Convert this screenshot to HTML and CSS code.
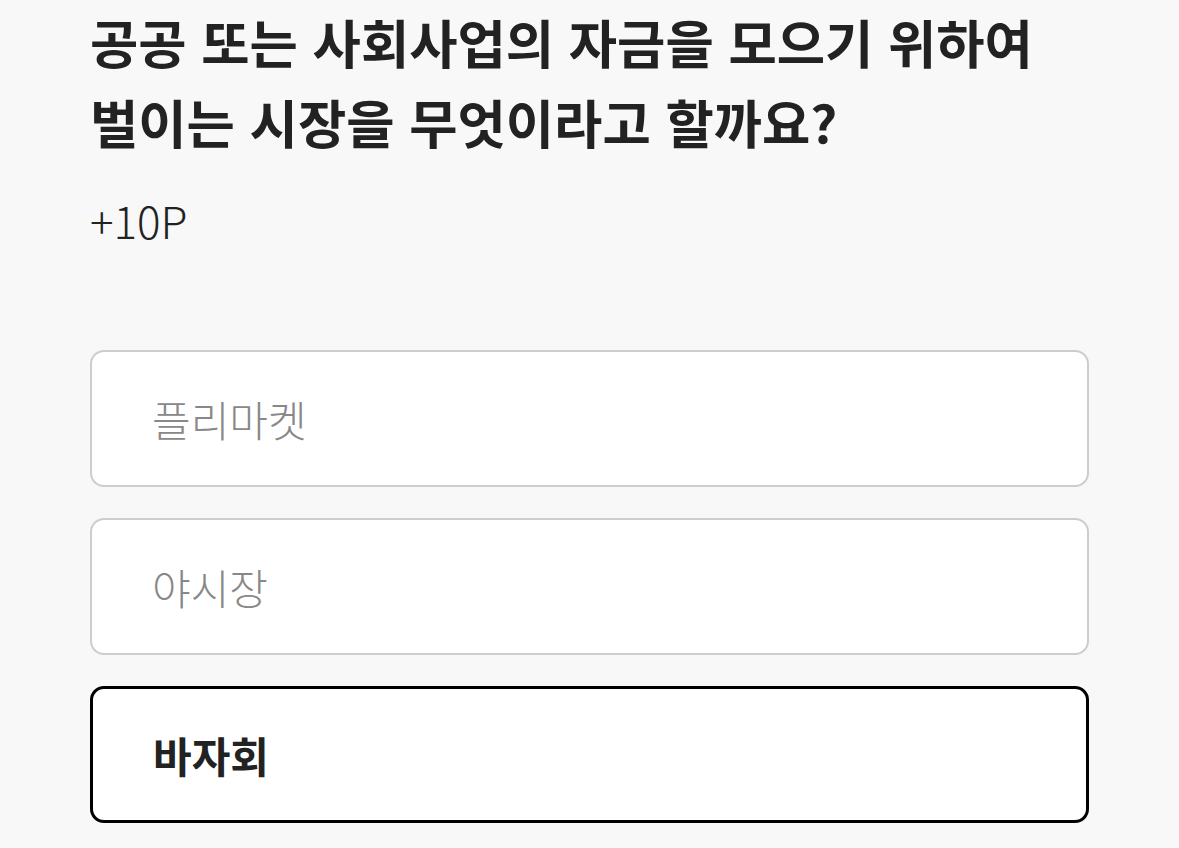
FILE: index.html
```html
<!DOCTYPE html>
<html lang="ko">

<head>
    <meta charset="UTF-8">
    <meta name="viewport" content="width=device-width, initial-scale=1.0">
    <title>퀴즈</title>
    <link rel="stylesheet" href="styles.css">
</head>

<body>
    <main class="quiz">
        <h1 class="question">공공 또는 사회사업의 자금을 모으기 위하여<br>벌이는 시장을 무엇이라고 할까요?</h1>
        <p class="reward">+10P</p>

        <ul class="options">
            <li class="option">플리마켓</li>
            <li class="option">야시장</li>
            <li class="option selected">바자회</li>
        </ul>
    </main>
</body>

</html>
```

FILE: styles.css
```css
body {
    font-family: "Noto Sans CJK KR", "Noto Sans", sans-serif;
    margin: 0;
    background-color: #f8f8f8;
    color: #222;
}

.quiz {
    padding: 0 90px;
}

.question {
    margin: 0;
    padding-top: 1px;
    font-size: 52.5px;
    font-weight: 700;
    line-height: 80px;
}

.reward {
    margin: 31px 0 0;
    font-size: 44px;
    font-weight: 300;
    line-height: 56px;
}

.options {
    list-style: none;
    margin: 102px 0 0;
    padding: 0;
    display: flex;
    flex-direction: column;
    gap: 31px;
}

.option {
    height: 137px;
    box-sizing: border-box;
    display: flex;
    align-items: center;
    padding: 0 60px;
    background-color: #fff;
    border: 2px solid #cdcdcd;
    border-radius: 14px;
    font-size: 42px;
    font-weight: 300;
    color: #888;
}

.option.selected {
    border: 3px solid #000;
    font-weight: 700;
    color: #222;
}
```
